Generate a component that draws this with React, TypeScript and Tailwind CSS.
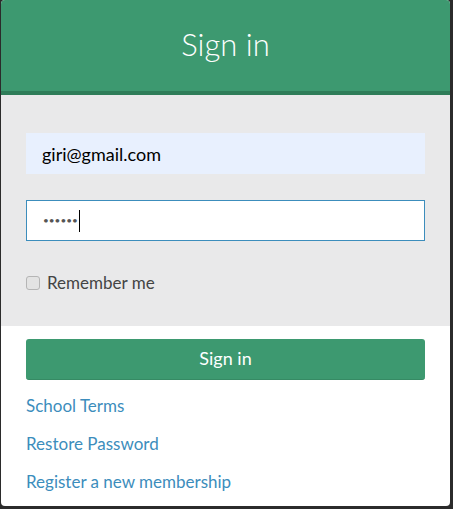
import React from "react";

const font = { fontFamily: "Lato, 'Open Sans', sans-serif" };

export default function App() {
  return (
    <div className="h-[509px] w-[453px] bg-[#2b2b2b] pl-px" style={font}>
      <div className="w-[449px] h-[506px] overflow-hidden rounded-[4px] bg-white">
        <div className="flex h-[95px] items-center justify-center border-b-4 border-[#2f7d59] bg-[#3d9970] pb-[3px]">
          <h1 className="text-[31px] font-light text-white">Sign in</h1>
        </div>

        <div className="flex flex-col bg-[#e9e9ea] px-[25px] pt-[38px] pb-[30px]">
          <input
            className="h-[41px] w-full bg-[#e8f0fe] px-[16px] text-[18px] text-black outline-none"
            defaultValue="giri@gmail.com"
          />
          <div className="mt-[26px] flex h-[41px] w-full items-center border border-[#3c8dbc] bg-white px-[16px]">
            <span className="text-[10px] tracking-[0px] text-[#555]">••••••</span>
            <span className="ml-px h-[22px] w-px bg-black" />
          </div>
          <label className="mt-[29px] flex items-center gap-[7px] text-[17px] text-[#444]">
            <span className="h-[14px] w-[14px] shrink-0 rounded-[3px] border border-[#b5b5b5] bg-[#e3e3e3]" />
            Remember me
          </label>
        </div>

        <div className="flex flex-col px-[25px] pt-[13px]">
          <button className="h-[41px] w-full rounded-[3px] border-b border-[#368a64] bg-[#3d9970] text-[18px] text-white">
            Sign in
          </button>
          <div className="mt-[15px] flex flex-col gap-[16px] text-[17px] text-[#3c8dbc]">
            <a className="leading-[22px]">School Terms</a>
            <a className="leading-[22px]">Restore Password</a>
            <a className="leading-[22px]">Register a new membership</a>
          </div>
        </div>
      </div>
    </div>
  );
}
